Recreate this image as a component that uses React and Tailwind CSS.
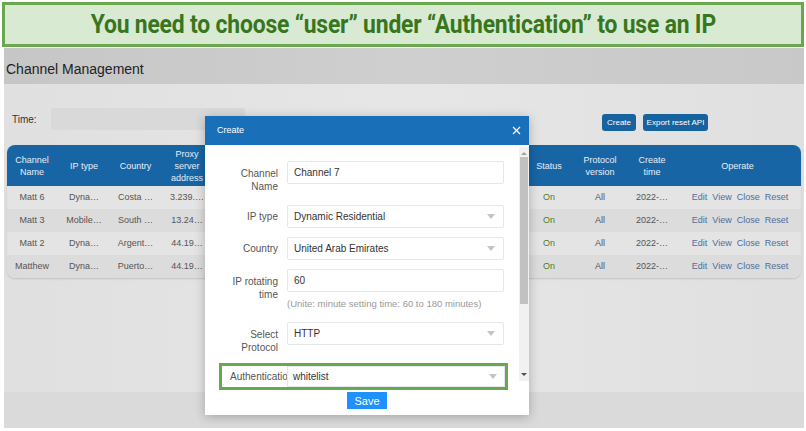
import React from "react";

const rows = [
  { name: "Matt 6", type: "Dyna…", country: "Costa …", proxy: "3.239.…" },
  { name: "Matt 3", type: "Mobile…", country: "South …", proxy: "13.24…" },
  { name: "Matt 2", type: "Dyna…", country: "Argent…", proxy: "44.19…" },
  { name: "Matthew", type: "Dyna…", country: "Puerto…", proxy: "44.19…" },
];

const cols = "grid grid-cols-[50px_54px_49px_54px_314px_42px_60px_44px_1fr]";

function Caret() {
  return (
    <svg width="8" height="5" viewBox="0 0 8 5" className="shrink-0">
      <path d="M0 0h8L4 5z" fill="#c0c4cc" />
    </svg>
  );
}

function Field({ label, children, tall }) {
  return (
    <div className="flex items-start">
      <div className={`w-[72px] shrink-0 pr-[9px] text-right text-[10px] leading-[13px] text-[#555] ${tall ? "pt-[6px]" : "pt-[5px]"}`}>
        {label}
      </div>
      <div className="w-[217px]">{children}</div>
    </div>
  );
}

function Input({ value, select }) {
  return (
    <div className="h-[23px] border border-[#e4e7ed] rounded-[2px] flex items-center justify-between pl-[6px] pr-[8px] text-[10px] text-[#333] bg-white">
      <span>{value}</span>
      {select && <Caret />}
    </div>
  );
}

export default function App() {
  return (
    <div className="w-[806px] h-[431px] bg-white overflow-hidden font-['Liberation_Sans',Arial,sans-serif]">
      {/* callout banner */}
      <div className="mx-[2px] mt-[2px] h-[45px] border-[3px] border-[#6aa84f] bg-[#d9ead3] flex items-center justify-center overflow-hidden">
        <div className="font-['Roboto',sans-serif] font-bold text-[26px] text-[#38761d] whitespace-nowrap scale-x-[0.88] tracking-[-0.2px]">
          You need to choose “user” under “Authentication” to use an IP
        </div>
      </div>

      {/* screenshot */}
      <div className="relative ml-[4px] mt-[1px] w-[800px] h-[380px] bg-[#e2e2e2] flex flex-col">
        <div className="h-[36px] shrink-0 bg-gradient-to-r from-[#c6c6c6] via-[#cfcfcf] to-[#c8c8c8] flex items-center pl-[2px] pt-[7px] text-[14px] text-[#222]">
          Channel Management
        </div>

        <div className="flex-1 bg-gradient-to-r from-[#e0e0e0] via-[#e6e6e6] to-[#e0e0e0] px-[3px]">
          <div className="flex items-center h-[50px] pt-[20px]">
            <span className="ml-[5px] text-[10px] text-[#333] w-[39px]">Time:</span>
            <div className="w-[194px] h-[22px] rounded-[3px] bg-[#d9d9d9]" />
            <div className="ml-auto mr-[93px] flex gap-[7px] mt-[7px]">
              <div className="w-[34px] h-[17px] rounded-[3px] bg-[#17639f] text-white text-[8px] flex items-center justify-center">Create</div>
              <div className="w-[65px] h-[17px] rounded-[3px] bg-[#17639f] text-white text-[8px] flex items-center justify-center">Export reset API</div>
            </div>
          </div>

          <div className="mt-[11px] rounded-[8px] overflow-hidden shadow-[0_1px_2px_rgba(0,0,0,0.15)]">
            <div className={`${cols} h-[41px] bg-[#1765a4] text-[#e8eef5] text-[9px] leading-[12px] text-center items-center`}>
              <div>Channel<br />Name</div>
              <div>IP type</div>
              <div>Country</div>
              <div>Proxy<br />server<br />address</div>
              <div />
              <div>Status</div>
              <div>Protocol<br />version</div>
              <div>Create<br />time</div>
              <div>Operate</div>
            </div>
            {rows.map((r, i) => (
              <div key={i} className={`${cols} h-[23px] items-center text-center text-[9px] text-[#555] ${i % 2 ? "bg-[#dcdcdc]" : "bg-[#e4e4e4]"}`}>
                <div>{r.name}</div>
                <div>{r.type}</div>
                <div>{r.country}</div>
                <div>{r.proxy}</div>
                <div />
                <div className="text-[#4f7d2b]">On</div>
                <div>All</div>
                <div>2022-…</div>
                <div className="flex justify-center gap-[5px] pl-[5px] text-[#4d6e9c]">
                  <span>Edit</span><span>View</span><span>Close</span><span>Reset</span>
                </div>
              </div>
            ))}
          </div>
        </div>
        <div className="h-[36px] shrink-0 bg-[#dadada]" />

        {/* modal */}
        <div className="absolute left-[201px] top-[68px] w-[324px] h-[299px] bg-white shadow-[0_2px_10px_rgba(0,0,0,0.25)] flex flex-col">
          <div className="h-[29px] shrink-0 bg-[#1a70b8] flex items-center justify-between pl-[12px] pr-[8px] text-white text-[9px]">
            <span>Create</span>
            <svg width="9" height="9" viewBox="0 0 9 9"><path d="M1 1l7 7M8 1L1 8" stroke="#fff" strokeWidth="1.2" /></svg>
          </div>
          <div className="flex flex-1">
            <div className="w-[314px] pl-[10px] pt-[16px] flex flex-col">
              <Field label={<>Channel<br />Name</>} tall><Input value="Channel 7" /></Field>
              <div className="mt-[12px]"><Field label="IP type"><Input value="Dynamic Residential" select /></Field></div>
              <div className="mt-[9px]"><Field label="Country"><Input value="United Arab Emirates" select /></Field></div>
              <div className="mt-[9px]">
                <Field label={<>IP rotating<br />time</>} tall>
                  <Input value="60" />
                  <div className="mt-[5px] text-[9.5px] text-[#999]">(Unite: minute setting time: 60 to 180 minutes)</div>
                </Field>
              </div>
              <div className="mt-[11px]"><Field label={<>Select<br />Protocol</>} tall><Input value="HTTP" select /></Field></div>
              <div className="mt-[9px] ml-[4px] w-[289px] h-[27px] border-[3px] border-[#6aa84f] flex items-center">
                <div className="w-[65px] shrink-0 overflow-hidden whitespace-nowrap pl-[8px] text-[10px] text-[#555]">Authentication</div>
                <div className="flex-1 h-[21px] border border-[#e4e7ed] flex items-center justify-between pl-[5px] pr-[7px] text-[10px] text-[#333] bg-white">
                  <span>whitelist</span>
                  <Caret />
                </div>
              </div>
              <div className="mt-[2px] ml-[132px] w-[40px] h-[17px] bg-[#1e90ff] text-white text-[11px] flex items-center justify-center">Save</div>
            </div>
            <div className="w-[10px] h-[234px] mt-[2px] bg-[#f1f1f1] flex flex-col items-center">
              <svg width="6" height="8" viewBox="0 0 6 8" className="mt-[2px]"><path d="M0 6h6L3 3z" fill="#a3a3a3" /></svg>
              <div className="w-[8px] h-[147px] bg-[#c1c1c1]" />
              <div className="flex-1" />
              <svg width="6" height="8" viewBox="0 0 6 8" className="mb-[2px]"><path d="M0 2h6L3 5z" fill="#505050" /></svg>
            </div>
          </div>
        </div>
      </div>
    </div>
  );
}
